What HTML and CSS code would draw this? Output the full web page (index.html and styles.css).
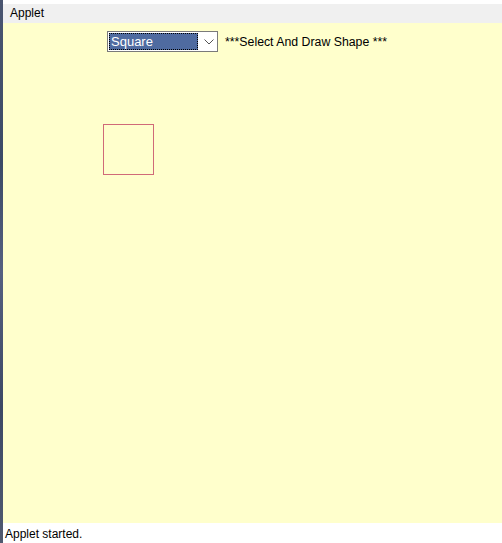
FILE: index.html
```html
<!DOCTYPE html>
<html>
<head>
<meta charset="utf-8">
<link rel="stylesheet" href="styles.css">
</head>
<body>
<div class="edge"></div>
<div class="window">
  <div class="topgap"></div>
  <div class="menubar">Applet</div>
  <div class="canvas">
    <div class="controls">
      <div class="select">
        <div class="sel-value"><span class="sel-text">Square</span></div>
        <svg class="chev" width="10" height="6" viewBox="0 0 10 6"><path d="M0.5 0.5 L5 5 L9.5 0.5" fill="none" stroke="#555" stroke-width="1"/></svg>
      </div>
      <div class="label">***Select And Draw Shape ***</div>
    </div>
    <div class="square"></div>
  </div>
  <div class="status">Applet started.</div>
</div>
</body>
</html>
```
FILE: styles.css
```css
html, body {
  margin: 0;
  padding: 0;
  width: 502px;
  height: 543px;
  overflow: hidden;
  background: #ffffff;
  font-family: "Liberation Sans", Arial, sans-serif;
}
body {
  display: flex;
}
.edge {
  width: 3px;
  height: 543px;
  background: linear-gradient(180deg, #4a5570 0%, #3b4a66 30%, #556080 50%, #3c4864 75%, #505a70 100%);
}
.window {
  flex: 1;
  display: flex;
  flex-direction: column;
}
.topgap {
  height: 4px;
  background: #ffffff;
}
.menubar {
  height: 19px;
  background: #f0f0f0;
  font-size: 12px;
  line-height: 19px;
  padding-left: 7px;
  color: #000;
}
.canvas {
  height: 500px;
  background: #ffffcc;
  position: relative;
}
.controls {
  display: flex;
  align-items: center;
  padding-top: 8px;
  padding-left: 104px;
  gap: 7px;
}
.select {
  box-sizing: border-box;
  width: 111px;
  height: 21px;
  border: 1px solid #7a7a7a;
  background: #ffffff;
  display: flex;
  align-items: center;
  padding: 1px;
}
.sel-value {
  box-sizing: border-box;
  width: 89px;
  height: 17px;
  background: #4f6ba0;
  border: 1px dotted #000;
  display: flex;
  align-items: center;
  padding-left: 1px;
}
.sel-text {
  color: #fff;
  font-size: 13px;
  line-height: 15px;
}
.chev {
  margin-left: 6px;
}
.label {
  font-size: 12.3px;
  color: #000;
}
.square {
  position: absolute;
  left: 100px;
  top: 101px;
  width: 49px;
  height: 49px;
  border: 1px solid #d06a78;
}
.status {
  height: 20px;
  background: #fff;
  font-size: 12px;
  line-height: 22px;
  padding-left: 2px;
  color: #000;
}
```
